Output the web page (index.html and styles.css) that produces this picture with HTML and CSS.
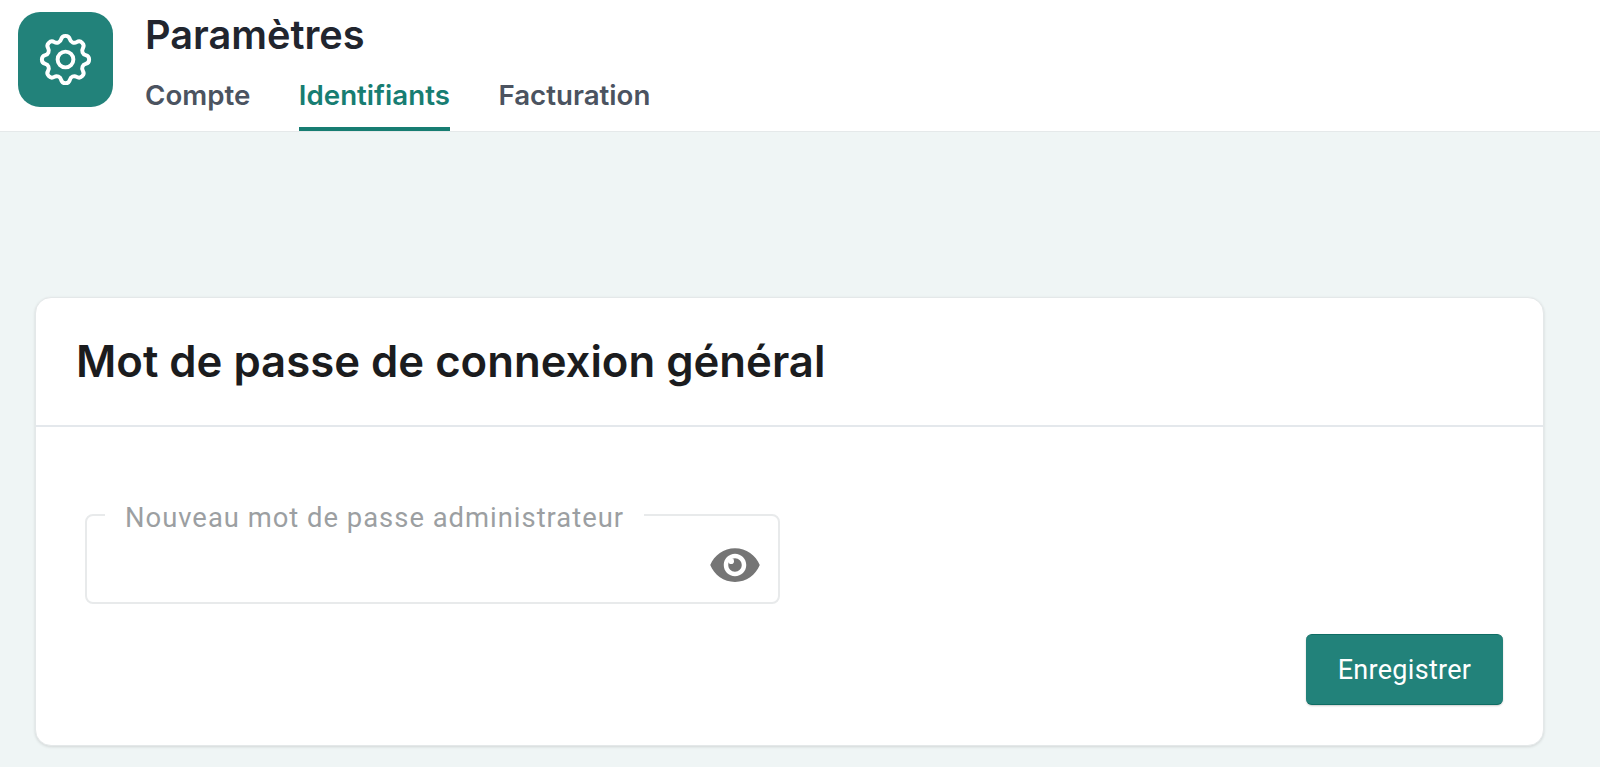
FILE: index.html

```html
<!DOCTYPE html>
<html lang="fr">
<head>
  <meta charset="UTF-8">
  <title>Paramètres - Identifiants</title>
  <link rel="stylesheet" href="styles.css">
</head>
<body>
  <header class="topbar">
    <div class="app-icon">
      <svg viewBox="0 0 24 24" width="63" height="63" fill="none" stroke="#fff" stroke-width="1.5" stroke-linecap="round" stroke-linejoin="round">
        <path d="M10.325 4.317c.426-1.756 2.924-1.756 3.35 0a1.724 1.724 0 002.573 1.066c1.543-.94 3.31.826 2.37 2.37a1.724 1.724 0 001.065 2.572c1.756.426 1.756 2.924 0 3.35a1.724 1.724 0 00-1.066 2.573c.94 1.543-.826 3.31-2.37 2.37a1.724 1.724 0 00-2.572 1.065c-.426 1.756-2.924 1.756-3.35 0a1.724 1.724 0 00-2.573-1.066c-1.543.94-3.31-.826-2.37-2.37a1.724 1.724 0 00-1.065-2.572c-1.756-.426-1.756-2.924 0-3.35a1.724 1.724 0 001.066-2.573c-.94-1.543.826-3.31 2.37-2.37.996.608 2.296.07 2.572-1.065z"/>
        <circle cx="12" cy="12" r="3"/>
      </svg>
    </div>
    <div class="topbar-text">
      <h1>Paramètres</h1>
      <nav class="tabs">
        <a class="tab">Compte</a>
        <a class="tab active">Identifiants</a>
        <a class="tab">Facturation</a>
      </nav>
    </div>
  </header>

  <main class="content">
    <section class="card">
      <h2 class="card-title">Mot de passe de connexion général</h2>
      <div class="card-body">
        <fieldset class="field">
          <legend>Nouveau mot de passe administrateur</legend>
          <input type="password" class="field-input">
          <svg class="eye" viewBox="0 0 24 24" width="54" height="54">
            <path fill="#757575" d="M12 4.5C7 4.5 2.73 7.61 1 12c1.73 4.39 6 7.5 11 7.5s9.27-3.11 11-7.5c-1.73-4.39-6-7.5-11-7.5zM12 17c-2.76 0-5-2.24-5-5s2.24-5 5-5 5 2.24 5 5-2.24 5-5 5zm0-8c-1.66 0-3 1.34-3 3s1.34 3 3 3 3-1.34 3-3-1.34-3-3-3z"/>
            <circle fill="#fff" cx="10.3" cy="10.3" r="1.25"/>
          </svg>
        </fieldset>
        <div class="actions">
          <button class="btn-save">Enregistrer</button>
        </div>
      </div>
    </section>
  </main>
</body>
</html>
```

FILE: styles.css

```css
* {
  box-sizing: border-box;
}
body {
  margin: 0;
  background: #eff5f5;
  font-family: Inter, sans-serif;
  height: 767px;
  overflow: hidden;
}
.topbar {
  display: flex;
  gap: 32px;
  height: 132px;
  padding: 12px 0 0 18px;
  background: #fff;
  border-bottom: 1px solid #e5e9ea;
}
.app-icon {
  width: 95px;
  height: 95px;
  border-radius: 22px;
  background: #22827a;
  display: flex;
  align-items: center;
  justify-content: center;
}
.topbar-text {
  display: flex;
  flex-direction: column;
}
h1 {
  margin: 0;
  font-size: 39.7px;
  line-height: 46px;
  font-weight: 600;
  color: #21252e;
}
.tabs {
  display: flex;
  gap: 48.5px;
  margin-top: 14px;
}
.tab {
  height: 59px;
  padding-top: 7px;
  font-size: 27.7px;
  line-height: 32px;
  font-weight: 600;
  color: #4b5360;
  border-bottom: 4px solid transparent;
}
.tab.active {
  color: #177d72;
  border-bottom-color: #177d72;
}
.content {
  padding: 165px 56px 0 35px;
}
.card {
  height: 449px;
  background: #fff;
  border: 1px solid #e4e8e9;
  border-radius: 16px;
  box-shadow: 0 1px 3px rgba(0, 0, 0, 0.12);
}
.card-title {
  margin: 0;
  height: 129px;
  padding: 0 0 0 40px;
  font-size: 43.7px;
  line-height: 128px;
  font-weight: 600;
  color: #1b1c1e;
  border-bottom: 2px solid #e4e8ec;
}
.card-body {
  padding: 72px 40px 0 49px;
}
.field {
  position: relative;
  width: 695px;
  height: 107px;
  margin: -2px 0 0;
  padding: 0 60px 0 18px;
  border: 2px solid #e8eaeb;
  border-radius: 8px;
}
.field legend {
  padding: 6px 20px 0;
  font-family: Roboto, sans-serif;
  font-size: 27.4px;
  line-height: 30px;
  letter-spacing: 1px;
  color: #9c9fa2;
}
.field-input {
  width: 100%;
  height: 56px;
  border: 0;
  outline: 0;
  background: transparent;
}
.eye {
  position: absolute;
  right: 16px;
  top: 5px;
}
.actions {
  display: flex;
  justify-content: flex-end;
  margin-top: 30px;
}
.btn-save {
  width: 197px;
  height: 71px;
  border: 0;
  border-bottom: 1px solid #0f6d64;
  border-top: 1px solid #0f6d64;
  border-radius: 6px;
  background: #22827a;
  color: #fff;
  font-family: Roboto, sans-serif;
  font-size: 27px;
  letter-spacing: 0.3px;
  box-shadow: 0 1px 2px rgba(0, 0, 0, 0.2);
}
```
